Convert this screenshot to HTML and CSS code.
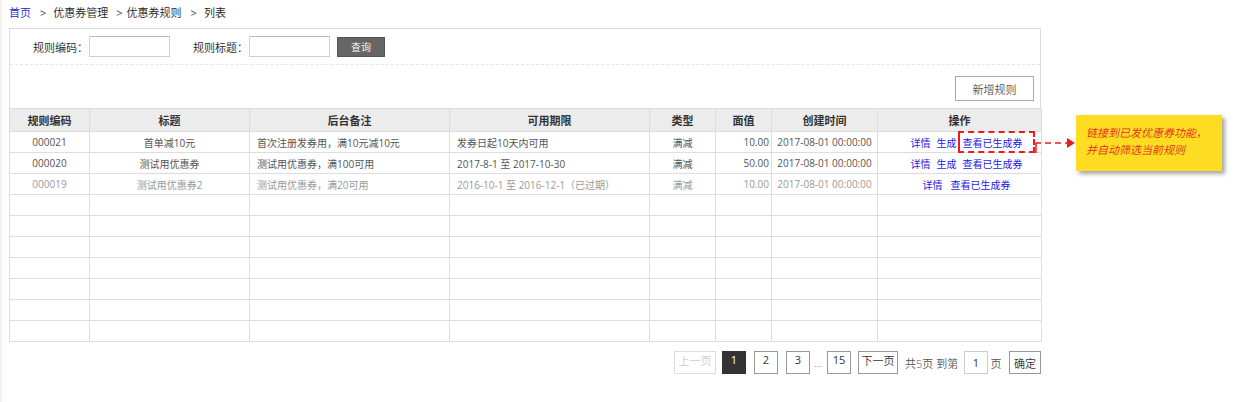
FILE: index.html
```html
<!DOCTYPE html>
<html lang="zh-CN">
<head>
<meta charset="utf-8">
<title>优惠券规则列表</title>
<link rel="stylesheet" href="styles.css">
</head>
<body>
<div class="page">
  <div class="crumbs">
    <a class="crumb-link" href="#">首页</a>
    <span class="sep">&gt;</span>
    <span>优惠券管理</span>
    <span class="sep sep-tight">&gt;</span>
    <span>优惠券规则</span>
    <span class="sep">&gt;</span>
    <span>列表</span>
  </div>

  <div class="panel">
    <div class="panel-top">
      <div class="search">
        <label class="field"><span class="field-label">规则编码：</span><input class="field-input" type="text"></label>
        <label class="field"><span class="field-label">规则标题：</span><input class="field-input" type="text"></label>
        <button class="btn-query" type="button">查询</button>
      </div>
      <div class="toolbar">
        <button class="btn-add" type="button">新增规则</button>
      </div>
    </div>

    <table class="grid">
      <colgroup>
        <col class="c1"><col class="c2"><col class="c3"><col class="c4"><col class="c5"><col class="c6"><col class="c7"><col class="c8">
      </colgroup>
      <thead>
        <tr>
          <th>规则编码</th><th>标题</th><th>后台备注</th><th>可用期限</th><th>类型</th><th>面值</th><th>创建时间</th><th>操作</th>
        </tr>
      </thead>
      <tbody>
        <tr>
          <td class="center">000021</td>
          <td class="center">首单减10元</td>
          <td class="left">首次注册发券用，满10元减10元</td>
          <td class="left">发券日起10天内可用</td>
          <td class="center">满减</td>
          <td class="right">10.00</td>
          <td class="center">2017-08-01 00:00:00</td>
          <td class="ops"><a href="#">详情</a><a href="#">生成</a><a href="#">查看已生成券</a></td>
        </tr>
        <tr>
          <td class="center">000020</td>
          <td class="center">测试用优惠券</td>
          <td class="left">测试用优惠券，满100可用</td>
          <td class="left">2017-8-1 至 2017-10-30</td>
          <td class="center">满减</td>
          <td class="right">50.00</td>
          <td class="center">2017-08-01 00:00:00</td>
          <td class="ops"><a href="#">详情</a><a href="#">生成</a><a href="#">查看已生成券</a></td>
        </tr>
        <tr class="expired">
          <td class="center">000019</td>
          <td class="center">测试用优惠券2</td>
          <td class="left">测试用优惠券，满20可用</td>
          <td class="left">2016-10-1 至 2016-12-1（已过期）</td>
          <td class="center">满减</td>
          <td class="right">10.00</td>
          <td class="center">2017-08-01 00:00:00</td>
          <td class="ops ops-wide"><a href="#">详情</a><a href="#">查看已生成券</a></td>
        </tr>
        <tr class="empty"><td></td><td></td><td></td><td></td><td></td><td></td><td></td><td></td></tr>
        <tr class="empty"><td></td><td></td><td></td><td></td><td></td><td></td><td></td><td></td></tr>
        <tr class="empty"><td></td><td></td><td></td><td></td><td></td><td></td><td></td><td></td></tr>
        <tr class="empty"><td></td><td></td><td></td><td></td><td></td><td></td><td></td><td></td></tr>
        <tr class="empty"><td></td><td></td><td></td><td></td><td></td><td></td><td></td><td></td></tr>
        <tr class="empty"><td></td><td></td><td></td><td></td><td></td><td></td><td></td><td></td></tr>
        <tr class="empty"><td></td><td></td><td></td><td></td><td></td><td></td><td></td><td></td></tr>
      </tbody>
    </table>

    <div class="pager">
      <span class="pg pg-prev">上一页</span>
      <span class="pg pg-num pg-active">1</span>
      <span class="pg pg-num">2</span>
      <span class="pg pg-num">3</span>
      <span class="pg-dots">...</span>
      <span class="pg pg-num pg-last">15</span>
      <span class="pg pg-next">下一页</span>
      <span class="pg-text pg-info">共5页 到第</span>
      <input class="pg-input" type="text" value="1">
      <span class="pg-text pg-unit">页</span>
      <button class="pg pg-ok" type="button">确定</button>
    </div>
  </div>

  <div class="highlight"></div>
  <svg class="connector" width="44" height="24" viewBox="0 0 44 24">
    <path d="M1 21 V11 H6" fill="none" stroke="#e61e1e" stroke-width="1.5"/>
    <path d="M10 11 H32" fill="none" stroke="#e61e1e" stroke-width="1.5" stroke-dasharray="6 4"/>
    <path d="M32 6 L40 11 L32 16 Z" fill="#e61e1e"/>
  </svg>
  <div class="note">链接到已发优惠券功能，<br>并自动筛选当前规则</div>
</div>
</body>
</html>
```

FILE: styles.css
```css
* { box-sizing: border-box; }

html, body {
  margin: 0;
  padding: 0;
  background: #fff;
}

body {
  font-family: "Open Sans", "Noto Sans CJK SC", "Noto Sans", sans-serif;
  font-size: 11px;
  font-weight: 350;
  color: #222;
}

.page {
  position: relative;
  width: 1238px;
  height: 402px;
  border-left: 2px solid #f2f2f2;
}

/* breadcrumbs */
.crumbs {
  height: 28px;
  padding: 4px 0 0 7px;
  line-height: 18px;
  display: flex;
  color: #222;
}
.crumb-link { color: #1a1acc; text-decoration: none; }
.sep { color: #444; margin: 0 7px 0 9px; font-weight: 400; }
.sep-tight { margin: 0 4px 0 8px; }

/* panel */
.panel {
  margin-left: 7px;
  width: 1032px;
}
.panel-top {
  border: 1px solid #dcdcdc;
  border-bottom: none;
}
.search {
  display: flex;
  align-items: center;
  height: 36px;
  padding: 0 0 0 23px;
  border-bottom: 1px dashed #e6e6e6;
}
.field { display: flex; align-items: center; margin-right: 23px; }
.field-label { color: #222; width: 55px; }
.field-input {
  width: 81px;
  height: 21px;
  border: 1px solid #cfcfcf;
  border-top-color: #bdbdbd;
  padding: 0 3px;
  font: inherit;
  margin-left: 1px;
}
.btn-query {
  margin-left: -16px;
  width: 48px;
  height: 20px;
  border: 1px solid #555;
  background: #666;
  color: #fff;
  font: inherit;
  font-size: 10px;
  padding: 0;
}

.toolbar {
  height: 43px;
  display: flex;
  justify-content: flex-end;
  align-items: flex-start;
  padding: 11px 6px 0 0;
}
.btn-add {
  width: 79px;
  height: 25px;
  border: 1px solid #a9a9a9;
  background: #fff;
  color: #555;
  font: inherit;
  padding: 0;
}

/* table */
.grid {
  width: 1032px;
  border-collapse: collapse;
  table-layout: fixed;
  font-size: 10px;
}
.c1 { width: 80px; }
.c2 { width: 160px; }
.c3 { width: 200px; }
.c4 { width: 200px; }
.c5 { width: 66px; }
.c6 { width: 56px; }
.c7 { width: 106px; }
.c8 { width: 164px; }

.grid th, .grid td {
  border: 1px solid #dddddd;
  padding: 0;
  white-space: nowrap;
  overflow: hidden;
}
.grid th {
  height: 23px;
  background: #ececec;
  color: #333;
  font-weight: bold;
  font-size: 11px;
  text-align: center;
}
.grid td {
  height: 21px;
  color: #555;
  font-weight: 400;
}
.grid .center { text-align: center; }
.grid .left { text-align: left; padding-left: 7px; }
.grid .right { text-align: right; padding-right: 2px; }
.grid .ops { text-align: center; padding-left: 14px; }
.grid .ops a {
  color: #1a1ae6;
  text-decoration: none;
  margin: 0 3px;
}
.grid .ops-wide a { margin: 0 4px; }
.grid tr.expired td {
  color: #999;
  border-top: 1px solid #cfcfcf;
}

/* pager */
.pager {
  display: flex;
  justify-content: flex-end;
  align-items: center;
  margin-top: 9px;
  height: 23px;
  font-size: 11px;
}
.pg {
  height: 23px;
  line-height: 21px;
  border: 1px solid #999;
  background: #fff;
  color: #333;
  padding: 0;
  margin-left: 8px;
  text-align: center;
  font: inherit;
}
.pg-num { width: 24px; font-weight: 400; }
.pg-prev { color: #ccc; border-color: #ddd; width: 42px; margin-left: 0; }
.pg-active { background: #333; border-color: #333; color: #fff; margin-left: 6px; }
.pg-dots { color: #666; width: 12px; margin-left: 2px; text-align: center; }
.pg-last { margin-left: 3px; }
.pg-next { width: 40px; margin-left: 7px; }
.pg-text { color: #555; margin-left: 7px; }
.pg-info { width: 54px; white-space: nowrap; }
.pg-input {
  width: 24px;
  height: 23px;
  margin-left: 5px;
  border: 1px solid #ccc;
  text-align: center;
  font: inherit;
  font-weight: 400;
  color: #333;
  padding: 0;
}
.pg-unit { margin-left: 2px; width: 12px; text-align: center; }
.pg-ok { width: 32px; margin-left: 7px; }

/* annotation */
.highlight {
  position: absolute;
  left: 956px;
  top: 131px;
  width: 77px;
  height: 22px;
  border: 2px dashed #e61e1e;
  border-left-style: solid;
}
.connector {
  position: absolute;
  left: 1033px;
  top: 132px;
}
.note {
  position: absolute;
  left: 1074px;
  top: 115px;
  width: 146px;
  height: 56px;
  background: #fddc22;
  box-shadow: 3px 3px 4px rgba(0, 0, 0, 0.35);
  color: #e61e1e;
  font-style: italic;
  font-size: 11px;
  line-height: 17px;
  padding: 9px 0 0 10px;
}
```
